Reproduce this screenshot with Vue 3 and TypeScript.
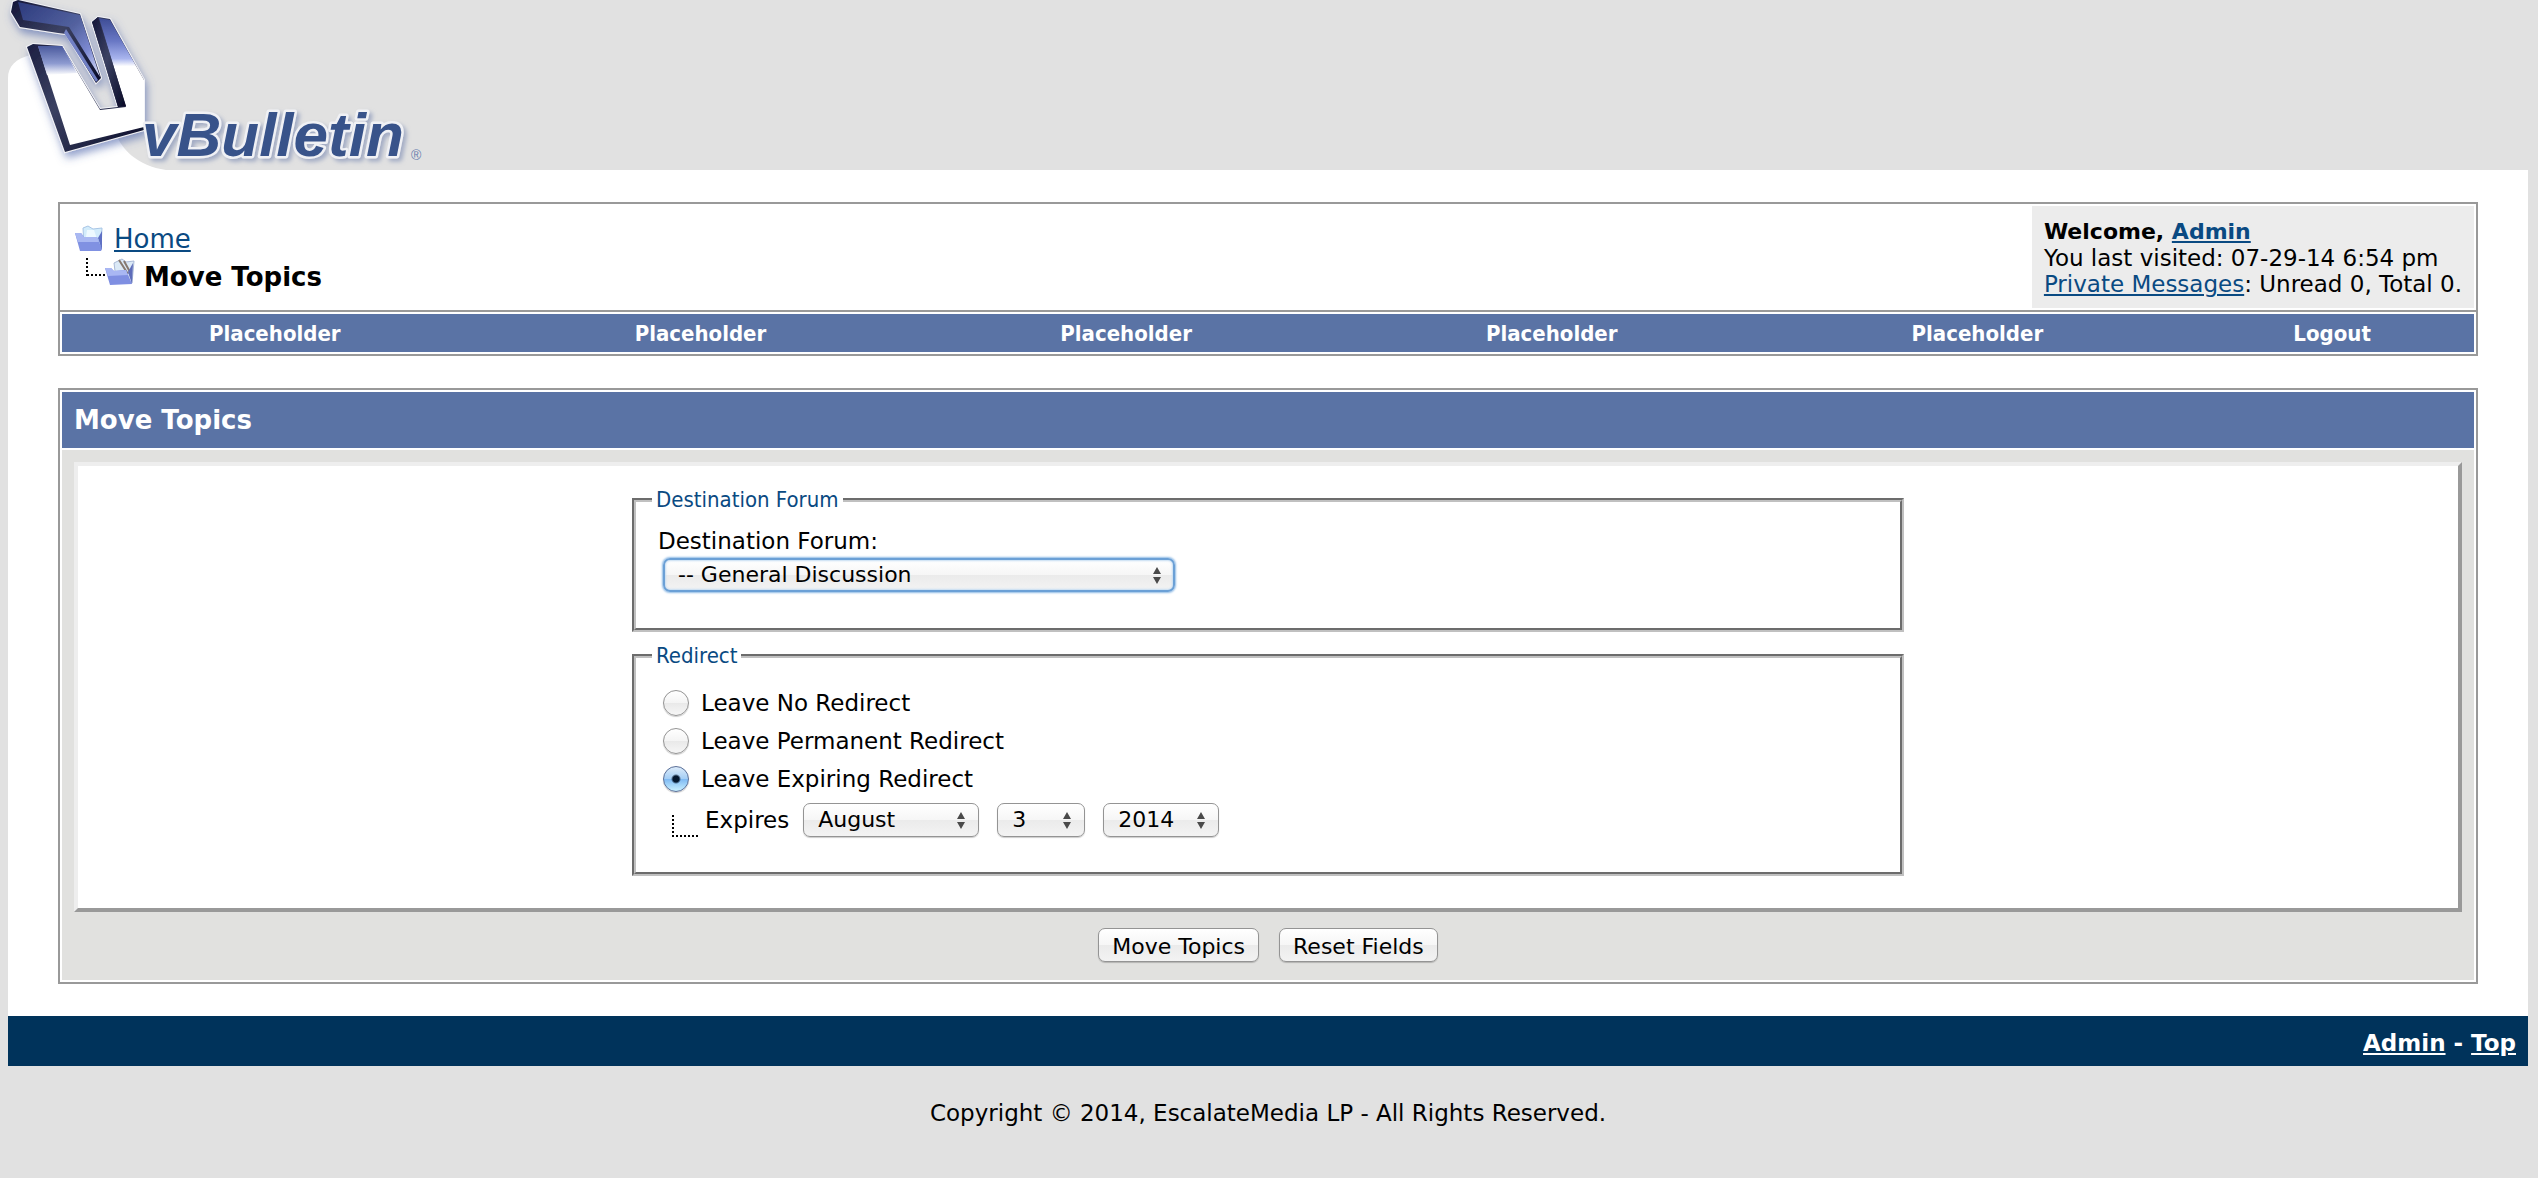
<script setup lang="ts">
import { ref } from 'vue'

interface Option {
  value: string
  label: string
}

const navItems: string[] = ['Placeholder', 'Placeholder', 'Placeholder', 'Placeholder', 'Placeholder', 'Logout']

const redirectOptions: Option[] = [
  { value: 'none', label: 'Leave No Redirect' },
  { value: 'perm', label: 'Leave Permanent Redirect' },
  { value: 'expires', label: 'Leave Expiring Redirect' },
]

const months: string[] = [
  'January', 'February', 'March', 'April', 'May', 'June',
  'July', 'August', 'September', 'October', 'November', 'December',
]
const days: number[] = Array.from({ length: 31 }, (_, i) => i + 1)
const years: number[] = [2014, 2015, 2016]

const forum = ref('general')
const redirect = ref('expires')
const month = ref('August')
const day = ref(3)
const year = ref(2014)

function resetFields(): void {
  forum.value = 'general'
  redirect.value = 'expires'
  month.value = 'August'
  day.value = 3
  year.value = 2014
}
</script>

<template>
  <div class="shell">
    <header id="top">
      <svg class="logo" width="430" height="170" viewBox="8 0 430 170" role="img" aria-label="vBulletin">
        <defs>
          <linearGradient id="face" x1="0" y1="0" x2="0" y2="1">
            <stop offset="0" stop-color="#3d4c94" />
            <stop offset="0.18" stop-color="#6877c4" />
            <stop offset="0.32" stop-color="#a9b5ee" />
            <stop offset="0.38" stop-color="#ffffff" />
          </linearGradient>
          <linearGradient id="leftFace" x1="0" y1="0" x2="0" y2="1">
            <stop offset="0" stop-color="#4a5a9d" />
            <stop offset="0.6" stop-color="#8d9ad0" />
            <stop offset="1" stop-color="#ffffff" />
          </linearGradient>
          <linearGradient id="hook" x1="0" y1="0" x2="1" y2="1">
            <stop offset="0" stop-color="#2c3a7d" />
            <stop offset="0.5" stop-color="#53629f" />
            <stop offset="0.75" stop-color="#7d8ad2" />
            <stop offset="1" stop-color="#dfe4fb" />
          </linearGradient>
          <linearGradient id="edge" x1="0" y1="0" x2="1" y2="1">
            <stop offset="0" stop-color="#131538" />
            <stop offset="0.45" stop-color="#3b4162" />
            <stop offset="1" stop-color="#080a26" />
          </linearGradient>
          <filter id="soft" x="-20%" y="-20%" width="150%" height="150%">
            <feDropShadow dx="2" dy="5" stdDeviation="4" flood-color="#4860a8" flood-opacity="0.6" />
          </filter>
          <filter id="wordShadow" x="-5%" y="-10%" width="115%" height="130%">
            <feDropShadow dx="3" dy="3" stdDeviation="2" flood-color="#8795b8" flood-opacity="0.7" />
          </filter>
        </defs>
        <path d="M8 170V78C8 66 16 59 30 55L112 125C120 150 138 166 166 170Z" fill="#fff" />
        <g filter="url(#soft)">
          <path d="M13 2L18 0L80 14L84 26L101 78L96 83L66 34L58 33L20 27L11 12Z" fill="url(#edge)" stroke="#f2f3f8" stroke-width="2" paint-order="stroke" />
          <path d="M18 2L80 15L85 30L100 77L69 27L23 20Z" fill="url(#hook)" />
          <path d="M64 33L66 29L98 80L96 82Z" fill="#7180c4" />
          <path d="M27 47L33 44L62 46L100 109L118 107L92 22L98 17L110 19L144 80V130L65 152Z" fill="url(#edge)" stroke="#f2f3f8" stroke-width="2" paint-order="stroke" />
          <path d="M38 46L62 46L100 110L126 107L99 18L110 20L144 80V127L70 145Z" fill="url(#face)" />
          <path d="M38 46L62 46L77 73L47 75Z" fill="url(#leftFace)" />
          <path d="M92 22L98 17L126 106L118 107Z" fill="url(#edge)" />
        </g>
        <g filter="url(#wordShadow)">
          <text class="wordmark" x="142" y="156">vBulletin</text>
        </g>
        <text class="registered" x="411" y="160">®</text>
      </svg>
    </header>

    <main>
      <section class="box">
        <div class="intro">
          <nav class="crumbs" aria-label="Breadcrumb">
            <div class="crumb">
              <svg width="30" height="28" viewBox="0 0 30 28" aria-hidden="true">
                <path d="M9 3L14 1L19 4L28 3L27 24L10 20Z" fill="#d3ecfb" stroke="#a9c6e6" />
                <path d="M13 5L20 5L25 20L12 12Z" fill="#eefaff" />
                <path d="M1 8L7 8L10 12L23 12L28 24L27 26L6 26Z" fill="#8091e2" />
                <path d="M1 8L7 8L10 12L23 12L25 17L4 17Z" fill="#a9b8f2" />
                <path d="M24 13L28 6V25Z" fill="#5f70c4" />
              </svg>
              <a href="#">Home</a>
            </div>
            <div class="crumb child">
              <svg width="49" height="30" viewBox="0 0 49 30" aria-hidden="true">
                <path d="M1 0V18" stroke="#000" stroke-width="2" stroke-dasharray="2 2" />
                <path d="M1 17H19" stroke="#000" stroke-width="2" stroke-dasharray="2 2" />
                <path d="M28 5L36 1L40 4L48 3L46 25L30 21Z" fill="#dbe9f6" stroke="#a9b9d6" />
                <path d="M33 2L42 16M38 3L44 14" stroke="#87796f" stroke-width="2" />
                <path d="M19 10L25 10L28 13L40 12L46 26L24 27Z" fill="#7f8fe2" />
                <path d="M19 10L25 10L28 13L40 12L42 17L22 18Z" fill="#a9b7f3" />
                <path d="M42 14L47 5L46 26Z" fill="#5e6cb9" />
              </svg>
              <strong>Move Topics</strong>
            </div>
          </nav>
          <div class="welcome">
            <strong>Welcome, <a href="#">Admin</a></strong>
            <div>You last visited: 07-29-14 6:54 pm</div>
            <div><a href="#">Private Messages</a>: Unread 0, Total 0.</div>
          </div>
        </div>
        <nav class="menu" aria-label="Main">
          <a v-for="(item, i) in navItems" :key="i" href="#">{{ item }}</a>
        </nav>
      </section>

      <form class="box" @submit.prevent @reset.prevent="resetFields">
        <h1>Move Topics</h1>
        <div class="panel">
          <div class="surface">
            <fieldset>
              <legend>Destination Forum</legend>
              <div class="fields">
                <label for="forum">Destination Forum:</label>
                <span class="picker forum focused">
                  <select id="forum" v-model="forum">
                    <option value="general">-- General Discussion</option>
                  </select>
                  <svg width="8" height="17" viewBox="0 0 8 17" aria-hidden="true"><path d="M4 0L8 7H0ZM4 17L0 10H8Z" fill="#4a4a4a" /></svg>
                </span>
              </div>
            </fieldset>

            <fieldset>
              <legend>Redirect</legend>
              <div class="fields">
                <label v-for="option in redirectOptions" :key="option.value" class="choice">
                  <input v-model="redirect" type="radio" name="redirect" :value="option.value" />
                  {{ option.label }}
                </label>
                <div class="expires">
                  <svg class="elbow" width="26" height="22" viewBox="0 0 26 22" aria-hidden="true">
                    <path d="M1 0V20M0 21H26" stroke="#000" stroke-width="2" stroke-dasharray="2 2" fill="none" />
                  </svg>
                  <label for="month">Expires</label>
                  <span class="picker month">
                    <select id="month" v-model="month">
                      <option v-for="m in months" :key="m" :value="m">{{ m }}</option>
                    </select>
                    <svg width="8" height="17" viewBox="0 0 8 17" aria-hidden="true"><path d="M4 0L8 7H0ZM4 17L0 10H8Z" fill="#4a4a4a" /></svg>
                  </span>
                  <span class="picker day">
                    <select v-model="day" aria-label="Day">
                      <option v-for="d in days" :key="d" :value="d">{{ d }}</option>
                    </select>
                    <svg width="8" height="17" viewBox="0 0 8 17" aria-hidden="true"><path d="M4 0L8 7H0ZM4 17L0 10H8Z" fill="#4a4a4a" /></svg>
                  </span>
                  <span class="picker year">
                    <select v-model="year" aria-label="Year">
                      <option v-for="y in years" :key="y" :value="y">{{ y }}</option>
                    </select>
                    <svg width="8" height="17" viewBox="0 0 8 17" aria-hidden="true"><path d="M4 0L8 7H0ZM4 17L0 10H8Z" fill="#4a4a4a" /></svg>
                  </span>
                </div>
              </div>
            </fieldset>
          </div>
          <div class="actions">
            <button type="submit">Move Topics</button>
            <button type="reset">Reset Fields</button>
          </div>
        </div>
      </form>
    </main>

    <footer><a href="#">Admin</a> - <a href="#top">Top</a></footer>
    <p class="copyright">Copyright © 2014, EscalateMedia LP - All Rights Reserved.</p>
  </div>
</template>

<style>
body {
  background: #e1e1e1;
}
</style>

<style scoped>
.shell {
  padding: 0 10px 0 8px;
  color: #000;
  font: 23px/26px "DejaVu Sans", Verdana, sans-serif;
}
.shell a {
  color: #0a4a82;
  text-underline-offset: 2px;
}
.logo {
  display: block;
  overflow: visible;
}
.wordmark {
  font: italic bold 62px "Liberation Sans Narrow", "Liberation Sans", sans-serif;
  fill: #37528a;
  stroke: #f0f1f5;
  stroke-width: 5px;
  stroke-linejoin: round;
  paint-order: stroke;
}
.registered {
  font: 14px "Liberation Sans", sans-serif;
  fill: #6a7fae;
}
main {
  display: flex;
  flex-direction: column;
  gap: 32px;
  padding: 32px 50px;
  background: #fff;
}
.box {
  padding: 2px;
  border: 2px solid #999;
}
.intro {
  display: flex;
  justify-content: space-between;
  margin: -2px -2px 2px;
  padding: 2px;
  border-bottom: 2px solid #999;
}
.crumbs {
  display: flex;
  flex-direction: column;
  justify-content: center;
  padding: 2px 0 0 12px;
  font-size: 26px;
  line-height: 38px;
}
.crumb {
  display: flex;
  align-items: center;
  gap: 10px;
}
.crumb.child {
  align-items: flex-start;
  gap: 9px;
  padding-left: 12px;
}
.welcome {
  padding: 13px 12px 11px;
  background: #ececec;
}
.welcome strong {
  display: block;
  font-size: 22px;
}
.menu {
  display: flex;
  background: #5a73a5;
}
.menu a {
  flex: 3 1 0;
  padding: 7px 0 5px;
  color: #fff;
  font-family: "DejaVu Sans Condensed", Tahoma, sans-serif;
  font-size: 22px;
  font-weight: bold;
  text-align: center;
  text-decoration: none;
}
.menu a:last-child {
  flex-grow: 2;
}
h1 {
  margin: 0 0 2px;
  padding: 0 12px;
  background: #5a73a5;
  color: #fff;
  font-size: 26px;
  line-height: 56px;
}
.panel {
  padding: 12px 12px 18px;
  background: #e1e1df;
}
.surface {
  padding: 21px 0 32px;
  border: 4px solid;
  border-color: #eee #999 #999 #eee;
  background: #fff;
}
fieldset {
  box-sizing: border-box;
  width: 100%;
  max-width: 1272px;
  margin: 0 auto 11px;
  padding: 15px 16px 36px;
  border: 4px groove #c0c0c0;
}
fieldset:last-child {
  margin-bottom: 0;
}
legend {
  padding: 0 4px;
  color: #0a4a82;
  font-family: "DejaVu Sans Condensed", Tahoma, sans-serif;
  font-size: 22px;
}
.fields {
  display: flex;
  flex-direction: column;
  align-items: flex-start;
  padding-left: 6px;
}
.picker {
  display: inline-flex;
  position: relative;
}
.picker svg {
  position: absolute;
  top: 9px;
  right: 14px;
  pointer-events: none;
}
select,
button {
  box-sizing: border-box;
  height: 34px;
  border: 1px solid #949494;
  border-radius: 7px;
  background: linear-gradient(#fff, #f6f6f6 50%, #ebebeb 51%, #f3f3f3);
  box-shadow: 0 1px 1px #0003;
  color: #000;
  font: inherit;
  font-size: 22px;
}
select {
  width: 100%;
  padding: 0 14px;
  appearance: none;
}
.forum {
  width: 512px;
  margin: 4px 0 0 5px;
}
.focused select {
  padding: 0 13px;
  border: 2px solid #6ba0d6;
  box-shadow: 0 0 2px 1px #8fbbe6, inset 0 0 2px 1px #c4dcf2;
}
.choice {
  display: flex;
  align-items: center;
  gap: 12px;
  height: 38px;
}
.choice input {
  width: 26px;
  height: 26px;
  margin: 0 0 0 5px;
  border: 1px solid #949494;
  border-radius: 50%;
  background: linear-gradient(#fff, #f4f4f4 50%, #e9e9e9 51%, #f6f6f6);
  box-shadow: 0 1px 1px #0003;
  appearance: none;
}
.choice input:checked {
  border-color: #5a6f98;
  background:
    radial-gradient(circle, #04172f 3px, transparent 5px),
    linear-gradient(#dcebfa, #a3cdf5 50%, #7fbaf3 51%, #c9f0ff);
}
.expires {
  display: flex;
  align-items: center;
  margin-top: 5px;
  margin-bottom: -1px;
  padding-left: 14px;
}
.elbow {
  align-self: flex-end;
  margin-right: 7px;
}
.month {
  width: 176px;
  margin: 0 18px 0 14px;
}
.day {
  width: 88px;
  margin-right: 18px;
}
.year {
  width: 116px;
}
.actions {
  display: flex;
  justify-content: center;
  gap: 20px;
  margin-top: 16px;
}
button {
  padding: 4px 13px 0;
  line-height: 28px;
}
footer {
  padding: 14px 12px 10px;
  background: #00335b;
  color: #fff;
  font-weight: bold;
  text-align: right;
}
.shell footer a {
  color: #fff;
}
.copyright {
  margin: 34px 0;
  text-align: center;
}
</style>
